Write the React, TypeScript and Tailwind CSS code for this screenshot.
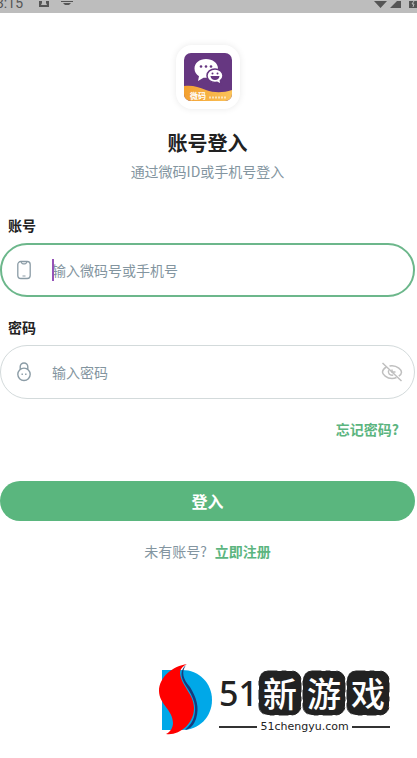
import { useState } from 'react';
import type { ReactNode } from 'react';

const tiles = ['新', '游', '戏'];

function StatusBar() {
  return (
    <div className="flex h-[13px] items-end justify-between overflow-hidden bg-[#bdbdbd] text-[#555]">
      <div className="-ml-1 flex items-end gap-3">
        <span className="pr-1 font-['Roboto',sans-serif] text-sm leading-5">3:15</span>
        <svg viewBox="0 0 10 12" className="h-3 w-[10px]" aria-hidden>
          <path d="M0 0h10v6H0z" fill="#555" />
          <path d="M3 0h4v2l1 2H2l1-2z" fill="#bdbdbd" />
        </svg>
        <svg viewBox="0 0 12 12" className="h-3 w-3" aria-hidden>
          <path d="M0 0h12v1H0zM2 2h8L8 4H4z" fill="#555" />
        </svg>
      </div>
      <svg viewBox="0 0 44 12" className="h-3 w-11" aria-hidden>
        <path d="M1 0h13L7.500 7zM17 7 28 -4v11zM36 0h8v7h-8z" fill="#555" />
        <path d="m41 0-2 3h2l-1 3" fill="none" stroke="#bdbdbd" />
      </svg>
    </div>
  );
}

function AppLogo() {
  return (
    <div className="rounded-2xl bg-white p-2 shadow-[0_0_7px_rgba(0,0,0,0.09)]">
      <svg viewBox="0 0 48 48" className="size-12" role="img" aria-label="微码">
        <defs>
          <clipPath id="logo-clip">
            <rect width="48" height="48" rx="7" />
          </clipPath>
          <linearGradient id="logo-wave" x1="0" x2="1">
            <stop offset="0" stopColor="#f3a02f" />
            <stop offset="1" stopColor="#fbc35a" />
          </linearGradient>
        </defs>
        <g clipPath="url(#logo-clip)">
          <rect width="48" height="48" fill="#663781" />
          <path d="M0 33c9-1 14 1 22 4s17 3 26 0v11H0z" fill="url(#logo-wave)" />
          <path
            d="M22 6c-6.500 0-11.500 4-11.500 9.500 0 3.400 1.800 6 4.500 7.700L14 28l5.500-3.300c5 .6 14.500-1.500 14.500-9.200C34 10 28.500 6 22 6z"
            fill="#fff"
          />
          <circle cx="17" cy="13.500" r="1.300" fill="#663781" />
          <circle cx="22" cy="13.500" r="1.300" fill="#663781" />
          <circle cx="27" cy="13.500" r="1.300" fill="#663781" />
          <path
            d="M31 16c-4.500 0-8 2.900-8 6.700s3.500 6.800 8 6.800l2-.2 4 2-.6-3.600c1.600-1.200 2.600-3 2.600-5 0-3.800-3.500-6.700-8-6.700z"
            fill="#fff"
            stroke="#663781"
            strokeWidth="1.500"
          />
          <circle cx="28.500" cy="20.500" r="1" fill="#663781" />
          <circle cx="33.500" cy="20.500" r="1" fill="#663781" />
          <path d="M26.500 23h9c-.3 2.500-2 4-4.500 4s-4.200-1.500-4.500-4z" fill="#663781" />
          <text x="6" y="46" fill="#fff" className="font-['Noto_Sans_CJK_SC',sans-serif] text-[8px] font-bold">
            微码
          </text>
          <path d="M25 44.500h18" stroke="#fff" strokeWidth="2" strokeDasharray="2 1" opacity="0.6" />
        </g>
      </svg>
    </div>
  );
}

function PhoneIcon() {
  return (
    <svg viewBox="0 0 18 20" className="h-5 w-[18px]" fill="none" stroke="#8b9ca6" aria-hidden>
      <rect x="2.800" y="1.500" width="12.400" height="17" rx="3" strokeWidth="1.300" />
      <path d="M5.500 1.500c.6 0 .8.500 1 1.100.3.900.7 1.200 1.500 1.200h2c.8 0 1.200-.3 1.500-1.200.2-.6.400-1.100 1-1.100M7.500 16h3" strokeWidth="1.200" />
    </svg>
  );
}

function LockIcon() {
  return (
    <svg viewBox="0 0 18 20" className="h-5 w-[18px]" fill="none" stroke="#8b9ca6" aria-hidden>
      <circle cx="9" cy="12.300" r="6.200" strokeWidth="1.400" />
      <path d="M5.200 7.300V4.800a3.800 3.800 0 0 1 7.600 0v2.500" strokeWidth="1.400" />
      <path d="M7.200 11.500v1.500M10.800 11.500v1.500" strokeWidth="1.400" />
    </svg>
  );
}

function EyeOffIcon() {
  return (
    <svg viewBox="0 0 22 20" className="h-5 w-[22px]" fill="none" stroke="#bfbfbf" strokeWidth="1.500" aria-hidden>
      <path d="M5.500 5C3 6.500 1.500 8.700 1.500 10.300c0 2 4 6.200 9.500 6.200 1.700 0 3.200-.4 4.500-1M8.500 4c.8-.2 1.600-.2 2.500-.2 5.500 0 9.500 4.200 9.500 6.500 0 1.200-1 2.700-2.700 3.900" />
      <path d="M7.700 8.200c-1.200 3 1 5.500 4.500 4.900" />
      <path d="M11 7.500v2.500h3.500" />
      <path d="m1.500 1 19 18" />
    </svg>
  );
}

interface FieldProps {
  id: string;
  label: string;
  icon: ReactNode;
  placeholder: string;
  type?: string;
  active?: boolean;
  children?: ReactNode;
}

function Field({ id, label, icon, placeholder, type = 'text', active = false, children }: FieldProps) {
  return (
    <div>
      <label htmlFor={id} className="block pl-2 text-sm leading-5 font-bold text-[#222]">
        {label}
      </label>
      <div
        className={
          active
            ? 'mt-2 flex h-[54px] items-center rounded-full border-2 border-[#6cb78b] pr-3 pl-[13px]'
            : 'mt-2 flex h-[54px] items-center rounded-full border border-[#d3dadb] pr-[11px] pl-[14px]'
        }
      >
        {icon}
        <div className="relative ml-[19px] flex flex-1 items-center">
          <input
            id={id}
            type={type}
            placeholder={placeholder}
            className="w-full min-w-0 bg-transparent text-sm text-[#222] outline-none placeholder:text-[#8395a0]"
          />
          {active && <span aria-hidden className="absolute inset-y-0 left-0 my-auto h-[22px] w-0.5 bg-[#9553b8]" />}
        </div>
        {children}
      </div>
    </div>
  );
}

function SiteBadge() {
  return (
    <div className="flex items-start self-end pr-[25px] text-[#222]">
      <svg viewBox="0 0 54 74" className="h-[74px] w-[54px]" aria-hidden>
        <path d="M3 7h20c17 0 30 13 30 30S40 67 23 67H3z" fill="#00a8e8" />
        <path
          d="M27 2c-6 5-6 12 0 21 8 12 11 20 8 31-1 4-4 8-9 13 6-1 9-6 11-11 4-12 0-22-6-32C24 16 22 9 27 2z"
          fill="#173b7d"
        />
        <path
          d="M28 1C14 3 0 14 0 28c0 13 14 19 14 32 0 5-3 9-7 11 13 2 28-10 28-26 0-14-13-22-14-35 0-4 3-7 7-9z"
          fill="#f00"
        />
      </svg>
      <div className="ml-1.5 flex flex-col gap-px pt-[7px]">
        <div className="flex items-center">
          <span className="font-['Noto_Sans',sans-serif] text-[34px] leading-[46px] font-medium">51</span>
          {tiles.map((tile) => (
            <span key={tile} className="relative flex h-[46px] w-11 items-center justify-center">
              <svg viewBox="0 0 44 46" className="absolute inset-0 h-full w-full" aria-hidden>
                <rect x="1" y="1" width="42" height="44" rx="9" fill="#222" />
                <rect
                  x="1"
                  y="1"
                  width="42"
                  height="44"
                  rx="9"
                  fill="none"
                  stroke="#222"
                  strokeWidth="1"
                  strokeLinecap="round"
                  strokeDasharray="9 5 4 7 12 4"
                />
              </svg>
              <span className="relative text-[34px] leading-[46px] font-medium text-white">{tile}</span>
            </span>
          ))}
        </div>
        <div className="flex items-center gap-[3px]">
          <span className="h-0.5 flex-1 bg-[#333]" />
          <span className="font-['DejaVu_Sans',sans-serif] text-[11px] leading-5">51chengyu.com</span>
          <span className="h-0.5 flex-1 bg-[#333]" />
        </div>
      </div>
    </div>
  );
}

export default function App() {
  const [visible, setVisible] = useState(false);

  return (
    <div className="flex min-h-screen flex-col bg-white font-['Noto_Sans_CJK_SC',sans-serif]">
      <StatusBar />
      <main className="flex flex-1 flex-col pr-0.5">
        <header className="flex flex-col items-center pt-8">
          <AppLogo />
          <h1 className="mt-5 text-xl leading-7 font-bold text-[#222]">账号登入</h1>
          <p className="mt-0.5 text-sm leading-6 text-[#8395a0]">通过微码ID或手机号登入</p>
        </header>

        <form className="mt-8 flex flex-col" onSubmit={(e) => e.preventDefault()}>
          <div className="flex flex-col gap-5">
            <Field id="account" label="账号" icon={<PhoneIcon />} placeholder="输入微码号或手机号" active />
            <Field
              id="password"
              label="密码"
              icon={<LockIcon />}
              placeholder="输入密码"
              type={visible ? 'text' : 'password'}
            >
              <button type="button" aria-label="显示密码" onClick={() => setVisible(!visible)}>
                <EyeOffIcon />
              </button>
            </Field>
          </div>
          <a href="#forgot" className="mt-5 mr-4 self-end text-sm leading-5 font-bold text-[#5cb57f]">
            忘记密码?
          </a>
          <button
            type="submit"
            className="mt-[42px] h-10 rounded-full bg-[#5ab67e] text-base font-bold text-white"
          >
            登入
          </button>
        </form>

        <p className="mt-5 flex justify-center gap-2 text-sm leading-5 text-[#8395a0]">
          未有账号?
          <a href="#register" className="font-bold text-[#5cb57f]">
            立即注册
          </a>
        </p>
        <div className="mt-auto flex flex-col pb-[21px]">
          <SiteBadge />
        </div>
      </main>
    </div>
  );
}
